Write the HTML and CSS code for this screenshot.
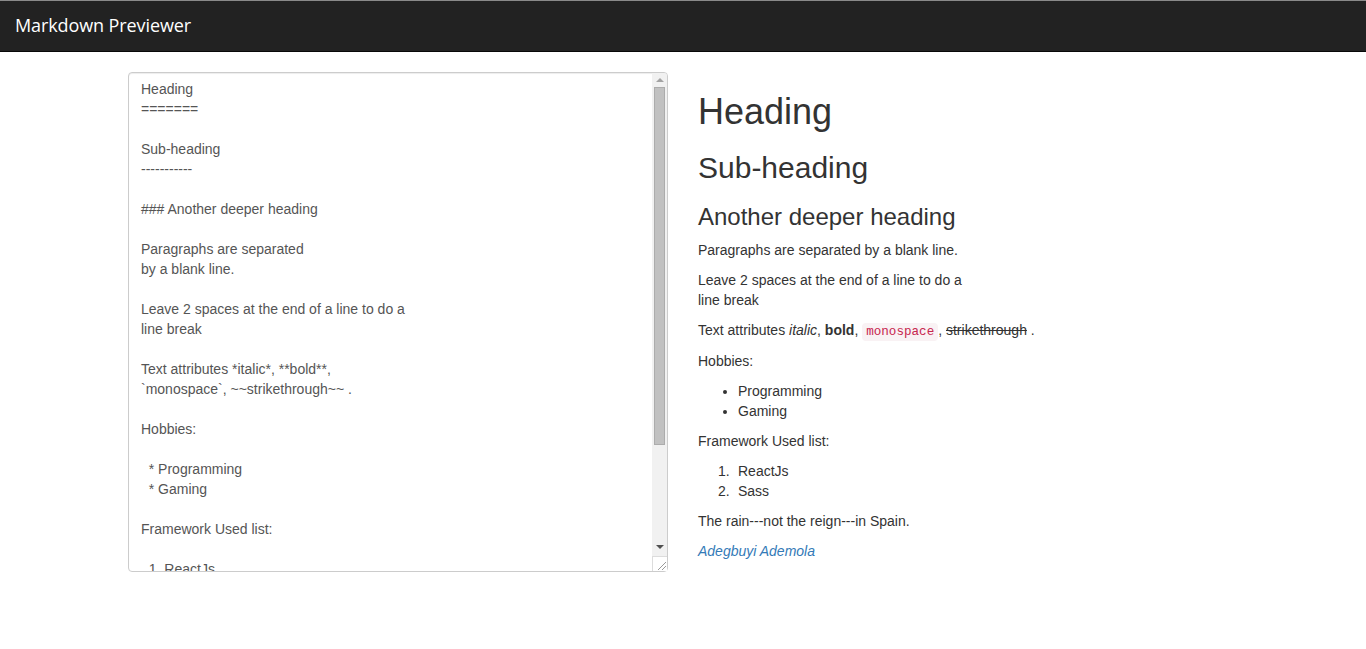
FILE: index.html
```html
<!DOCTYPE html>
<html lang="en">
<head>
<meta charset="utf-8">
<title>Markdown Previewer</title>
<link rel="stylesheet" href="styles.css">
</head>
<body>
<nav class="navbar">
  <span class="brand">Markdown Previewer</span>
</nav>
<div class="container">
  <div class="row">
    <div class="col col-editor">
      <div class="editor-wrap">
        <textarea class="editor" spellcheck="false">Heading
=======

Sub-heading
-----------

### Another deeper heading

Paragraphs are separated
by a blank line.

Leave 2 spaces at the end of a line to do a
line break

Text attributes *italic*, **bold**,
`monospace`, ~~strikethrough~~ .

Hobbies:

  * Programming
  * Gaming

Framework Used list:

  1. ReactJs
  2. Sass

The rain---not the reign---in Spain.

 *[Adegbuyi Ademola](https://github.com/)*</textarea>
        <div class="scrollbar" aria-hidden="true">
          <div class="sb-btn sb-up"></div>
          <div class="sb-track"><div class="sb-thumb"></div></div>
          <div class="sb-btn sb-down"></div>
          <div class="sb-corner">
            <svg width="13" height="13" viewBox="0 0 13 13">
              <path d="M4 12 L12 4 M8 12 L12 8" stroke="#9a9a9a" stroke-width="1" fill="none"/>
            </svg>
          </div>
        </div>
      </div>
    </div>
    <div class="col col-preview">
      <h1>Heading</h1>
      <h2>Sub-heading</h2>
      <h3>Another deeper heading</h3>
      <p>Paragraphs are separated by a blank line.</p>
      <p>Leave 2 spaces at the end of a line to do a<br>line break</p>
      <p>Text attributes <em>italic</em>, <strong>bold</strong>, <code>monospace</code>, <del>strikethrough</del> .</p>
      <p>Hobbies:</p>
      <ul>
        <li>Programming</li>
        <li>Gaming</li>
      </ul>
      <p>Framework Used list:</p>
      <ol class="num-list">
        <li><span class="num">1.</span>ReactJs</li>
        <li><span class="num">2.</span>Sass</li>
      </ol>
      <p>The rain---not the reign---in Spain.</p>
      <p><em><a href="#">Adegbuyi Ademola</a></em></p>
    </div>
  </div>
</div>
</body>
</html>
```
FILE: styles.css
```css
* {
  box-sizing: border-box;
}

html, body {
  margin: 0;
  padding: 0;
}

body {
  font-family: "Liberation Sans", Arial, Helvetica, sans-serif;
  font-size: 14px;
  line-height: 20px;
  color: #333;
  background: #fff;
}

.navbar {
  height: 52px;
  background: #222;
  border-top: 1px solid #8a8a8a;
  border-bottom: 1px solid #080808;
  display: flex;
  align-items: center;
  padding: 0 15px 2px;
  margin-bottom: 20px;
}

.brand {
  font-family: "Open Sans", "Lato", sans-serif;
  font-size: 18px;
  color: #fff;
  letter-spacing: -0.1px;
}

.container {
  width: 1170px;
  margin: 0 auto;
  padding: 0 15px;
}

.row {
  display: flex;
  margin: 0 -15px;
}

.col {
  width: 50%;
  padding: 0 15px;
}

.col-editor {
  padding-left: 30px;
}

.editor-wrap {
  position: relative;
  height: 500px;
}

.editor {
  display: block;
  width: 100%;
  height: 500px;
  margin: 0;
  padding: 6px 27px 6px 12px;
  border: 1px solid #ccc;
  border-radius: 4px;
  box-shadow: inset 0 1px 1px rgba(0, 0, 0, 0.075);
  font-family: "Liberation Sans", Arial, Helvetica, sans-serif;
  font-size: 14px;
  line-height: 20px;
  color: #555;
  background: #fff;
  resize: none;
  outline: none;
  overflow: hidden;
}

/* decorative scrollbar drawn over the textarea's right edge */
.scrollbar {
  position: absolute;
  top: 1px;
  right: 1px;
  bottom: 1px;
  width: 15px;
  display: flex;
  flex-direction: column;
  background: #f1f1f1;
  border-top-right-radius: 3px;
  border-bottom-right-radius: 3px;
  pointer-events: none;
}

.sb-btn {
  height: 14px;
  flex: none;
  display: flex;
  align-items: center;
  justify-content: center;
}

.sb-up::before,
.sb-down::before {
  content: "";
  width: 0;
  height: 0;
  border-left: 4px solid transparent;
  border-right: 4px solid transparent;
}

.sb-up::before {
  border-bottom: 4px solid #a3a3a3;
}

.sb-down::before {
  border-top: 4px solid #505050;
}

.sb-track {
  flex: 1;
  padding: 0 2px;
}

.sb-thumb {
  height: 358px;
  background: #c1c1c1;
  border: 1px solid #acacac;
}

.sb-corner {
  height: 15px;
  flex: none;
  background: #fff;
  border-top: 1px solid #dcdcdc;
  border-left: 1px solid #dcdcdc;
  margin-top: 2px;
  display: flex;
  align-items: flex-end;
  justify-content: flex-end;
}

.sb-corner svg {
  display: block;
}

h1, h2, h3 {
  font-family: "Liberation Sans", Arial, Helvetica, sans-serif;
  font-weight: 500;
  line-height: 1.1;
  color: inherit;
  margin: 20px 0 10px;
}

h1 {
  font-size: 36px;
}

h2 {
  font-size: 30px;
  margin-top: 19px;
}

h3 {
  font-size: 24px;
  margin-top: 20px;
  margin-bottom: 10px;
}

p {
  margin: 0 0 10px;
}

ul, ol {
  margin: 0 0 10px;
  padding-left: 40px;
}

.num-list {
  list-style: none;
}

.num-list li {
  display: flex;
}

.num {
  width: 20px;
  margin-left: -20px;
}

code {
  font-family: "Liberation Mono", "Courier New", monospace;
  font-size: 90%;
  line-height: 17px;
  padding: 2px 4px;
  color: #c7254e;
  background: #f9f2f4;
  border-radius: 4px;
}

a {
  color: #337ab7;
  text-decoration: none;
}
```
